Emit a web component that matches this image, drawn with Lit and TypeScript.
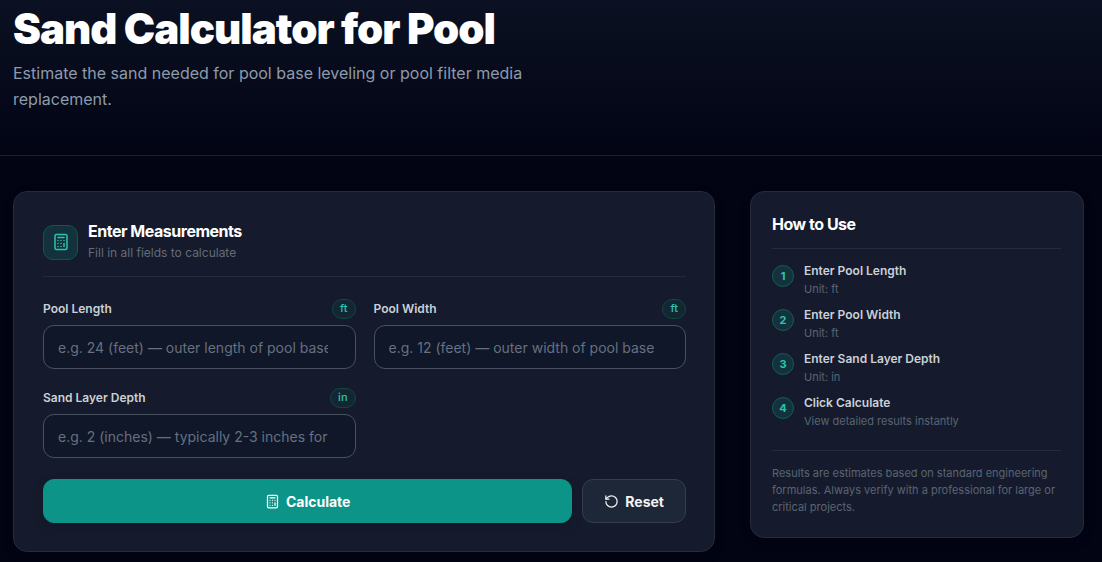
import { LitElement, html, svg, css } from "lit";
import { customElement, state } from "lit/decorators.js";

interface Field {
  id: string;
  label: string;
  unit: string;
  placeholder: string;
}

const FIELDS: Field[] = [
  { id: "length", label: "Pool Length", unit: "ft", placeholder: "e.g. 24 (feet) — outer length of pool base" },
  { id: "width", label: "Pool Width", unit: "ft", placeholder: "e.g. 12 (feet) — outer width of pool base" },
  { id: "depth", label: "Sand Layer Depth", unit: "in", placeholder: "e.g. 2 (inches) — typically 2-3 inches for base" },
];

const STEPS = [
  ...FIELDS.map((f) => ({ title: `Enter ${f.label}`, note: `Unit: ${f.unit}` })),
  { title: "Click Calculate", note: "View detailed results instantly" },
];

const calculatorShape = svg`
  <rect width="16" height="20" x="4" y="2" rx="2" />
  <path d="M8 6h8M16 14v4M16 10h.01M12 10h.01M8 10h.01M12 14h.01M8 14h.01M12 18h.01M8 18h.01" />
`;
const resetShape = svg`
  <path d="M3 12a9 9 0 1 0 9-9 9.75 9.75 0 0 0-6.74 2.74L3 8" />
  <path d="M3 3v5h5" />
`;

@customElement("app-root")
export class AppRoot extends LitElement {
  static styles = css`
    :host {
      display: block;
      min-height: 100vh;
      background: #020414;
      color: #fff;
      font-family: Inter, "Liberation Sans", sans-serif;
    }
    *, *::before, *::after { box-sizing: border-box; }
    h1, h2, p, ol { margin: 0; padding: 0; }
    .hero {
      padding: 4px 18px 43px 13px;
      border-bottom: 1px solid #1b2130;
      background: linear-gradient(#0b1122, #020414);
    }
    .hero h1 {
      font-size: 42px;
      line-height: 50px;
      font-weight: 900;
      letter-spacing: -1px;
    }
    .hero p {
      max-width: 540px;
      margin-top: 6px;
      font-size: 16px;
      line-height: 26px;
      color: #8e9bac;
    }
    main {
      display: grid;
      grid-template-columns: minmax(0, 1fr) 334px;
      gap: 35px;
      align-items: start;
      padding: 35px 18px 10px 13px;
    }
    .card {
      border: 1px solid #242c3b;
      border-radius: 14px;
      background: #151b2c;
      box-shadow: 0 4px 12px rgb(0 0 0 / 0.15);
    }
    .form { padding: 28px 28px 28px 29px; }
    .guide { padding: 21px 22px 21px 21px; }
    h2 {
      font-size: 16px;
      line-height: 22px;
      font-weight: 700;
      letter-spacing: -0.03em;
    }
    .head {
      display: flex;
      align-items: center;
      gap: 10px;
      padding-bottom: 12px;
      border-bottom: 1px solid #242c3b;
    }
    .head p {
      font-size: 12px;
      line-height: 22px;
      color: #636b7a;
    }
    .tile {
      display: grid;
      place-items: center;
      width: 35px;
      height: 35px;
      border: 1px solid #135451;
      border-radius: 10px;
      background: #14323c;
      color: #2bc4b2;
    }
    .icon {
      width: 15px;
      height: 15px;
      fill: none;
      stroke: currentColor;
      stroke-width: 2;
      stroke-linecap: round;
      stroke-linejoin: round;
    }
    .tile .icon { width: 18px; height: 18px; }
    .fields {
      display: grid;
      grid-template-columns: repeat(2, minmax(0, 1fr));
      gap: 19px 18px;
      margin-top: 22px;
    }
    .label-row {
      display: flex;
      justify-content: space-between;
      align-items: center;
      margin-bottom: 6px;
    }
    label {
      font-size: 12px;
      line-height: 20px;
      font-weight: 600;
      color: #cbd0d6;
    }
    .unit {
      height: 20px;
      padding: 0 7px;
      border: 1px solid #134541;
      border-radius: 10px;
      background: #132733;
      color: #2bc4b2;
      font-size: 11px;
      line-height: 17px;
      font-weight: 500;
    }
    input {
      display: block;
      width: 100%;
      height: 44px;
      padding: 0 27px 0 14px;
      border: 1px solid #485160;
      border-radius: 11px;
      background: #0f1729;
      color: #fff;
      font: 400 14px Inter, "Liberation Sans", sans-serif;
    }
    input::placeholder { color: #677080; opacity: 1; }
    .actions {
      display: flex;
      gap: 10px;
      margin-top: 21px;
    }
    button {
      display: flex;
      align-items: center;
      justify-content: center;
      gap: 6px;
      height: 44px;
      padding: 0 21px;
      border: 1px solid #343d4c;
      border-radius: 11px;
      background: #1e2737;
      color: #f1f3f5;
      font: 700 14px Inter, "Liberation Sans", sans-serif;
      cursor: pointer;
    }
    .primary {
      flex: 1;
      border-color: #0d9488;
      background: #0d9488;
      color: #fff;
      box-shadow: 0 4px 12px rgb(0 0 0 / 0.15);
    }
    .guide h2 {
      padding-bottom: 13px;
      border-bottom: 1px solid #242c3b;
    }
    ol {
      display: grid;
      gap: 8px;
      padding: 12px 0 21px;
      list-style: none;
    }
    li {
      display: flex;
      align-items: flex-start;
      gap: 10px;
    }
    .num {
      width: 22px;
      height: 22px;
      margin-top: 4px;
      border: 1px solid #135d58;
      border-radius: 50%;
      background: #14323c;
      color: #2bc4b2;
      font-size: 11px;
      line-height: 20px;
      font-weight: 700;
      text-align: center;
    }
    .step-title {
      font-size: 12px;
      line-height: 20px;
      font-weight: 600;
      color: #cbd0d6;
    }
    .step-note {
      font-size: 11px;
      line-height: 16px;
      color: #5b6473;
    }
    .disclaimer {
      padding-top: 14px;
      border-top: 1px solid #242c3b;
      font-size: 11px;
      line-height: 17px;
      color: #5b6473;
    }
    @media (max-width: 760px) {
      main { grid-template-columns: minmax(0, 1fr); }
    }
    @media (max-width: 520px) {
      .fields { grid-template-columns: minmax(0, 1fr); }
    }
  `;

  @state() private values: Record<string, string> = {};

  private setValue(id: string, event: Event) {
    this.values = { ...this.values, [id]: (event.target as HTMLInputElement).value };
  }

  private renderField(field: Field) {
    return html`
      <div>
        <div class="label-row">
          <label for=${field.id}>${field.label}</label>
          <span class="unit">${field.unit}</span>
        </div>
        <input
          id=${field.id}
          inputmode="decimal"
          placeholder=${field.placeholder}
          .value=${this.values[field.id] ?? ""}
          @input=${(e: Event) => this.setValue(field.id, e)}
        />
      </div>
    `;
  }

  render() {
    return html`
      <header class="hero">
        <h1>Sand Calculator for Pool</h1>
        <p>Estimate the sand needed for pool base leveling or pool filter media replacement.</p>
      </header>
      <main>
        <form class="card form" @submit=${(e: Event) => e.preventDefault()}>
          <div class="head">
            <span class="tile"><svg class="icon" viewBox="0 0 24 24" aria-hidden="true">${calculatorShape}</svg></span>
            <div>
              <h2>Enter Measurements</h2>
              <p>Fill in all fields to calculate</p>
            </div>
          </div>
          <div class="fields">${FIELDS.map((f) => this.renderField(f))}</div>
          <div class="actions">
            <button class="primary" type="submit">
              <svg class="icon" viewBox="0 0 24 24" aria-hidden="true">${calculatorShape}</svg>Calculate
            </button>
            <button type="button" @click=${() => (this.values = {})}>
              <svg class="icon" viewBox="0 0 24 24" aria-hidden="true">${resetShape}</svg>Reset
            </button>
          </div>
        </form>
        <aside class="card guide">
          <h2>How to Use</h2>
          <ol>
            ${STEPS.map(
              (step, i) => html`
                <li>
                  <span class="num">${i + 1}</span>
                  <div>
                    <p class="step-title">${step.title}</p>
                    <p class="step-note">${step.note}</p>
                  </div>
                </li>
              `,
            )}
          </ol>
          <p class="disclaimer">
            Results are estimates based on standard engineering formulas. Always verify with a professional for large or
            critical projects.
          </p>
        </aside>
      </main>
    `;
  }
}
